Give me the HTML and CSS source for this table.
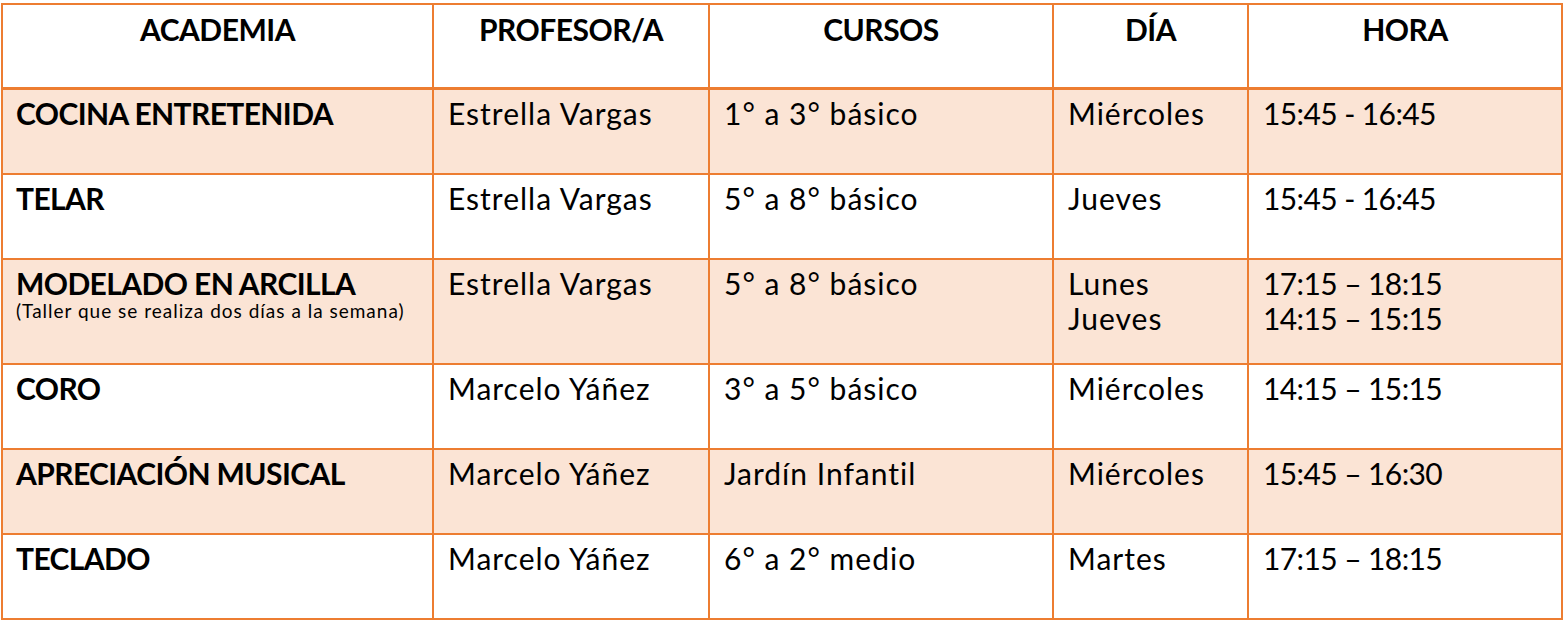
FILE: index.html
```html
<!DOCTYPE html>
<html lang="es">
<head>
<meta charset="utf-8">
<title>Academias</title>
<link rel="stylesheet" href="styles.css">
</head>
<body>
<div class="wrap">
<table class="sched">
  <colgroup>
    <col class="c1"><col class="c2"><col class="c3"><col class="c4"><col class="c5">
  </colgroup>
  <thead>
    <tr class="head">
      <th>ACADEMIA</th><th>PROFESOR/A</th><th>CURSOS</th><th>DÍA</th><th>HORA</th>
    </tr>
  </thead>
  <tbody>
    <tr class="shade">
      <td class="name">COCINA ENTRETENIDA</td><td>Estrella Vargas</td><td>1° a 3° básico</td><td>Miércoles</td><td class="time">15:45 - 16:45</td>
    </tr>
    <tr>
      <td class="name">TELAR</td><td>Estrella Vargas</td><td>5° a 8° básico</td><td>Jueves</td><td class="time">15:45 - 16:45</td>
    </tr>
    <tr class="shade tall">
      <td class="name">MODELADO EN ARCILLA<span class="note">(Taller que se realiza dos días a la semana)</span></td><td>Estrella Vargas</td><td>5° a 8° básico</td><td>Lunes<br>Jueves</td><td class="time">17:15 – 18:15<br>14:15 – 15:15</td>
    </tr>
    <tr>
      <td class="name">CORO</td><td>Marcelo Yáñez</td><td>3° a 5° básico</td><td>Miércoles</td><td class="time">14:15 – 15:15</td>
    </tr>
    <tr class="shade">
      <td class="name">APRECIACIÓN MUSICAL</td><td>Marcelo Yáñez</td><td>Jardín Infantil</td><td>Miércoles</td><td class="time">15:45 – 16:30</td>
    </tr>
    <tr>
      <td class="name">TECLADO</td><td>Marcelo Yáñez</td><td>6° a 2° medio</td><td>Martes</td><td class="time">17:15 – 18:15</td>
    </tr>
  </tbody>
</table>
</div>
</body>
</html>
```
FILE: styles.css
```css
html, body {
  margin: 0;
  padding: 0;
  background: #ffffff;
}
.wrap {
  padding: 3px 0 0 1px;
}
.sched {
  border-collapse: collapse;
  table-layout: fixed;
  width: 1560px;
  font-family: "Lato", "Liberation Sans", sans-serif;
  color: #000;
}
.c1 { width: 431px; }
.c2 { width: 276px; }
.c3 { width: 344px; }
.c4 { width: 195px; }
.c5 { width: 314px; }
.sched th, .sched td {
  border: 2px solid #ED7D31;
  vertical-align: top;
  text-align: left;
  padding: 6px 14px 0 14px;
  font-size: 30px;
  line-height: 35px;
  font-weight: 400;
  letter-spacing: 1px;
}
.head th {
  text-align: center;
  font-weight: 700;
  height: 75px;
  padding-top: 7px;
  border-bottom-width: 3px;
  letter-spacing: -0.5px;
}
.sched td {
  height: 77px;
}
.sched td.name {
  font-weight: 700;
  letter-spacing: -0.6px;
  padding-left: 13px;
}
.sched td.time {
  letter-spacing: -0.6px;
}
.shade td {
  background: #FBE4D5;
}
.tall td {
  height: 97px;
}
.note {
  display: block;
  font-size: 19px;
  line-height: 19px;
  font-weight: 400;
  letter-spacing: 1px;
}
```
